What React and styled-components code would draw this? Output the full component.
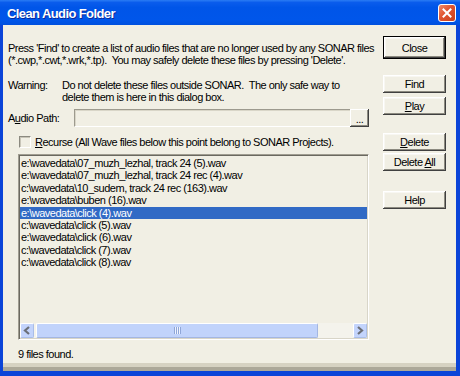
import React from "react";
import styled, { createGlobalStyle } from "styled-components";

const GlobalStyle = createGlobalStyle`
  html, body {
    margin: 0;
    padding: 0;
    background: #ffffff;
  }
  * {
    box-sizing: border-box;
  }
`;

const files = [
  "e:\\wavedata\\07_muzh_lezhal, track 24 (5).wav",
  "e:\\wavedata\\07_muzh_lezhal, track 24 rec (4).wav",
  "c:\\wavedata\\10_sudem, track 24 rec (163).wav",
  "e:\\wavedata\\buben (16).wav",
  "e:\\wavedata\\click (4).wav",
  "c:\\wavedata\\click (5).wav",
  "e:\\wavedata\\click (6).wav",
  "c:\\wavedata\\click (7).wav",
  "c:\\wavedata\\click (8).wav",
];

function Chevron({ dir }) {
  const d = dir === "left" ? "M7 2 L3 5.5 L7 9" : "M3 2 L7 5.5 L3 9";
  return (
    <svg width="10" height="11" viewBox="0 0 10 11">
      <path d={d} fill="none" stroke="#6b6f78" strokeWidth="2.2" />
    </svg>
  );
}

function CloseGlyph() {
  return (
    <svg width="10" height="10" viewBox="0 0 10 10">
      <path d="M1.5 1.5 L8.5 8.5 M8.5 1.5 L1.5 8.5" stroke="#ffffff" strokeWidth="2" strokeLinecap="square" />
    </svg>
  );
}

function App() {
  return (
    <>
      <GlobalStyle />
      <Window>
        <TitleBar>
          <Title>Clean Audio Folder</Title>
          <CloseBox>
            <CloseGlyph />
          </CloseBox>
        </TitleBar>
        <Client>
          <Body>
            <Main>
              <Para>
                <Line>Press 'Find' to create a list of audio files that are no longer used by any SONAR files</Line>
                <Line>(*.cwp,*.cwt,*.wrk,*.tp).&nbsp; You may safely delete these files by pressing 'Delete'.</Line>
              </Para>
              <WarningRow>
                <WarningLabel>Warning:</WarningLabel>
                <div>
                  <Line>Do not delete these files outside SONAR.&nbsp; The only safe way to</Line>
                  <Line>delete them is here in this dialog box.</Line>
                </div>
              </WarningRow>
              <PathRow>
                <PathLabel>
                  A<u>u</u>dio Path:
                </PathLabel>
                <PathField />
                <BrowseButton>...</BrowseButton>
              </PathRow>
              <CheckRow>
                <CheckBox />
                <span>
                  <u>R</u>ecurse (All Wave files below this point belong to SONAR Projects).
                </span>
              </CheckRow>
              <ListBox>
                <Items>
                  {files.map((f, i) => (
                    <Item key={i} $selected={i === 4}>
                      {f}
                    </Item>
                  ))}
                </Items>
                <HScroll>
                  <ArrowButton>
                    <Chevron dir="left" />
                  </ArrowButton>
                  <Thumb>
                    <Grip />
                  </Thumb>
                  <Track />
                  <ArrowButton>
                    <Chevron dir="right" />
                  </ArrowButton>
                </HScroll>
              </ListBox>
              <Status>9 files found.</Status>
            </Main>
            <Side>
              <ButtonGroup $top={0}>
                <Button $default>Close</Button>
              </ButtonGroup>
              <ButtonGroup $top={16} $gap={4}>
                <Button>Find</Button>
                <Button>
                  <u>P</u>lay
                </Button>
              </ButtonGroup>
              <ButtonGroup $top={18} $gap={2}>
                <Button>
                  <u>D</u>elete
                </Button>
                <Button>
                  Delete <u>A</u>ll
                </Button>
              </ButtonGroup>
              <ButtonGroup $top={20}>
                <Button>Help</Button>
              </ButtonGroup>
            </Side>
          </Body>
          <BottomEdge />
        </Client>
      </Window>
    </>
  );
}

const Window = styled.div`
  width: 460px;
  height: 376px;
  display: flex;
  flex-direction: column;
  background: #0b44d8;
  font-family: "Liberation Sans", Arial, sans-serif;
  font-size: 11px;
  letter-spacing: -0.5px;
  color: #000000;
`;

const TitleBar = styled.div`
  height: 25px;
  flex: none;
  display: flex;
  align-items: center;
  justify-content: space-between;
  padding: 0 4px 0 7px;
  background: linear-gradient(
    to bottom,
    #2a7cf4 0%,
    #0a5cec 10%,
    #0055e8 30%,
    #0056ea 80%,
    #0050de 100%
  );
`;

const Title = styled.span`
  color: #ffffff;
  font-weight: bold;
  font-size: 13px;
  letter-spacing: -0.6px;
  text-shadow: 1px 1px 0 #0a2a9a;
  padding-top: 1px;
`;

const CloseBox = styled.div`
  width: 18px;
  height: 18px;
  margin-top: 1px;
  display: flex;
  align-items: center;
  justify-content: center;
  border: 1px solid #ffffff;
  border-radius: 3px;
  background: linear-gradient(135deg, #f08a6a 0%, #e0542f 45%, #c8401d 100%);
`;

const Client = styled.div`
  flex: 1;
  display: flex;
  flex-direction: column;
  margin: 0 4px 5px 3px;
`;

const Body = styled.div`
  flex: 1;
  display: flex;
  background: #f1efe4;
`;

const BottomEdge = styled.div`
  height: 8px;
  flex: none;
  border-top: 4px solid #d6d2c2;
  background: #aca899;
`;

const Main = styled.div`
  flex: 1;
  display: flex;
  flex-direction: column;
  padding: 17px 0 0 5px;
`;

const Para = styled.div``;

const Line = styled.div`
  height: 12px;
  line-height: 12px;
  white-space: nowrap;
`;

const WarningRow = styled.div`
  display: flex;
  margin-top: 13px;
`;

const WarningLabel = styled.div`
  width: 54px;
  flex: none;
  line-height: 12px;
`;

const PathRow = styled.div`
  display: flex;
  align-items: center;
  height: 18px;
  margin-top: 6px;
`;

const PathLabel = styled.div`
  width: 66px;
  flex: none;
`;

const PathField = styled.div`
  width: 276px;
  height: 18px;
  background: #f1efe4;
  border-top: 1px solid #9d9a8e;
  border-left: 1px solid #9d9a8e;
  border-bottom: 1px solid #ffffff;
  box-shadow: inset 1px 1px 0 #d9d6c8;
`;

const BrowseButton = styled.div`
  width: 19px;
  height: 18px;
  display: flex;
  align-items: flex-end;
  justify-content: center;
  padding-bottom: 4px;
  line-height: 8px;
  background: #f1efe4;
  box-shadow: inset -1px -1px 0 #404040, inset 1px 1px 0 #ffffff,
    inset -2px -2px 0 #8c8a80;
`;

const CheckRow = styled.div`
  display: flex;
  align-items: center;
  gap: 4px;
  height: 13px;
  margin: 8px 0 0 11px;
`;

const CheckBox = styled.div`
  width: 12px;
  height: 12px;
  flex: none;
  background: #f1efe4;
  border-top: 1px solid #8c8a80;
  border-left: 1px solid #8c8a80;
  border-right: 1px solid #ffffff;
  border-bottom: 1px solid #ffffff;
  box-shadow: inset 1px 1px 0 #c8c5b8;
`;

const ListBox = styled.div`
  width: 351px;
  height: 186px;
  margin: 6px 0 0 10px;
  display: flex;
  flex-direction: column;
  background: #f1efe4;
  border-top: 1px solid #a09d91;
  border-left: 1px solid #a09d91;
  border-right: 1px solid #ffffff;
  border-bottom: 1px solid #ffffff;
  box-shadow: inset 1px 1px 0 #6b6960, inset -1px -1px 0 #d8d5c8;
  padding: 1px;
`;

const Items = styled.div`
  flex: 1;
  padding-top: 1px;
  overflow: hidden;
`;

const Item = styled.div`
  height: 12.4px;
  line-height: 12.4px;
  padding-left: 1px;
  white-space: nowrap;
  background: ${(p) => (p.$selected ? "#316ac5" : "transparent")};
  color: ${(p) => (p.$selected ? "#ffffff" : "#000000")};
`;

const HScroll = styled.div`
  height: 15px;
  flex: none;
  display: flex;
  align-items: stretch;
  background: #f4f3ec;
`;

const ArrowButton = styled.div`
  width: 14px;
  flex: none;
  display: flex;
  align-items: center;
  justify-content: center;
  background: #c3d4fc;
  border: 1px solid #ffffff;
  border-right-color: #a9bde8;
  border-bottom-color: #a9bde8;
  border-radius: 2px;
`;

const Thumb = styled.div`
  width: 282px;
  flex: none;
  margin-left: 2px;
  display: flex;
  align-items: center;
  justify-content: center;
  background: #c1d3fb;
  border: 1px solid #ffffff;
  border-right-color: #a3b6e2;
  border-bottom-color: #a3b6e2;
  border-radius: 2px;
`;

const Grip = styled.div`
  width: 7px;
  height: 7px;
  background: repeating-linear-gradient(
    to right,
    #8fa6d8 0px,
    #8fa6d8 1px,
    #eef3ff 1px,
    #eef3ff 2px
  );
`;

const Track = styled.div`
  flex: 1;
`;

const Status = styled.div`
  margin: 8px 0 0 10px;
  line-height: 12px;
`;

const Side = styled.div`
  width: 73px;
  flex: none;
  display: flex;
  flex-direction: column;
  padding: 11px 10px 0 0;
`;

const ButtonGroup = styled.div`
  display: flex;
  flex-direction: column;
  gap: ${(p) => p.$gap || 0}px;
  margin-top: ${(p) => p.$top}px;
`;

const Button = styled.button`
  width: 63px;
  height: ${(p) => (p.$default ? 23 : 18)}px;
  padding: 0;
  font: inherit;
  color: #000000;
  letter-spacing: -0.5px;
  background: #f1efe4;
  border: ${(p) => (p.$default ? "1px solid #000000" : "none")};
  box-shadow: inset -1px -1px 0 #404040, inset 1px 1px 0 #ffffff,
    inset -2px -2px 0 #8c8a80, inset 2px 2px 0 #f8f7f2;
`;

export default App;
